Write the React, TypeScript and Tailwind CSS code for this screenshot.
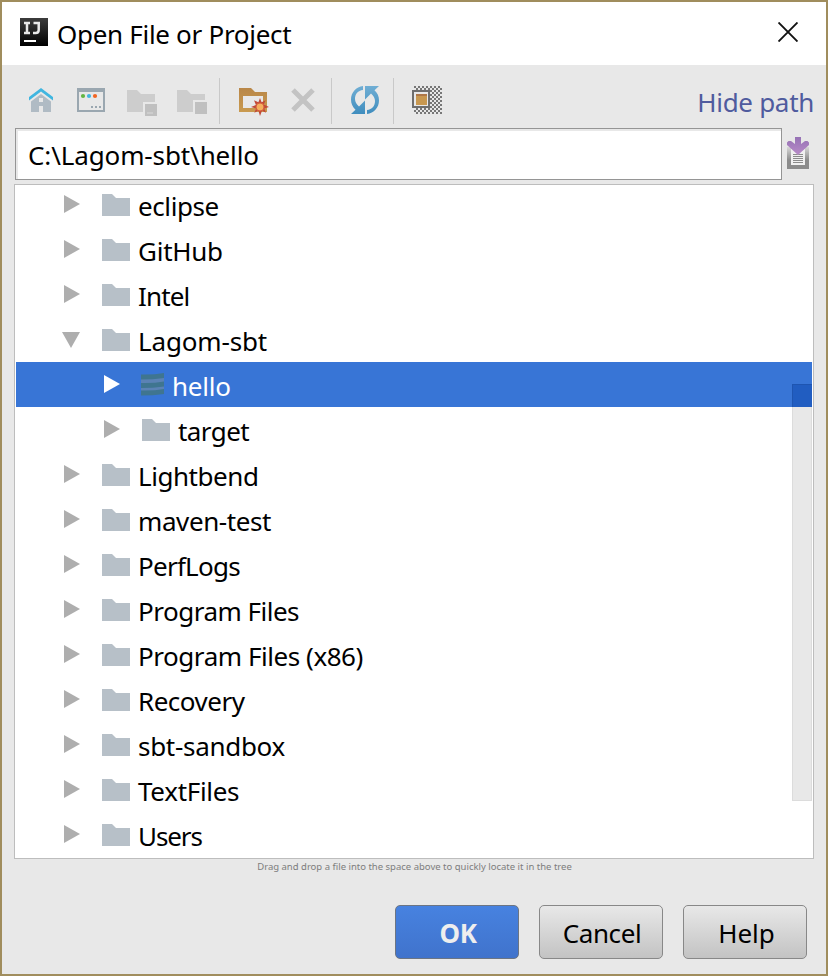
import React from "react";

type Node = { name: string; kind: "folder" | "sbt"; depth: number; open?: boolean; selected?: boolean; spacing: string };

const nodes: Node[] = [
  { name: "eclipse", kind: "folder", depth: 0, spacing: "tracking-[-0.4px]" },
  { name: "GitHub", kind: "folder", depth: 0, spacing: "tracking-[-0.25px]" },
  { name: "Intel", kind: "folder", depth: 0, spacing: "tracking-[-0.85px]" },
  { name: "Lagom-sbt", kind: "folder", depth: 0, open: true, spacing: "tracking-[-0.15px]" },
  { name: "hello", kind: "sbt", depth: 1, selected: true, spacing: "tracking-[-0.2px]" },
  { name: "target", kind: "folder", depth: 1, spacing: "tracking-[-0.55px]" },
  { name: "Lightbend", kind: "folder", depth: 0, spacing: "tracking-[-0.45px]" },
  { name: "maven-test", kind: "folder", depth: 0, spacing: "tracking-[-0.4px]" },
  { name: "PerfLogs", kind: "folder", depth: 0, spacing: "tracking-[-0.75px]" },
  { name: "Program Files", kind: "folder", depth: 0, spacing: "tracking-[-0.5px]" },
  { name: "Program Files (x86)", kind: "folder", depth: 0, spacing: "tracking-[-0.45px]" },
  { name: "Recovery", kind: "folder", depth: 0, spacing: "tracking-[-0.5px]" },
  { name: "sbt-sandbox", kind: "folder", depth: 0, spacing: "tracking-[-0.3px]" },
  { name: "TextFiles", kind: "folder", depth: 0, spacing: "tracking-[-0.3px]" },
  { name: "Users", kind: "folder", depth: 0, spacing: "tracking-[-1.1px]" },
];

function AppLogo() {
  return (
    <svg width="28" height="28" viewBox="0 0 28 28">
      <defs>
        <linearGradient id="logo" x1="0" y1="0" x2="0" y2="1">
          <stop offset="0" stopColor="#3c3c3c" />
          <stop offset="1" stopColor="#000" />
        </linearGradient>
      </defs>
      <rect width="28" height="28" fill="url(#logo)" />
      <path d="M4 5h6M7 5v10M4 15h6M13.500 5H20M18.700 4v8q0 3-3 3H13" fill="none" stroke="#e8e8e8" strokeWidth="2.500" />
      <rect x="4" y="22" width="12" height="2" fill="#fff" />
    </svg>
  );
}

function HomeIcon() {
  return (
    <svg width="24" height="24" viewBox="0 0 24 24">
      <path d="M2 13.500 12 6l10 7.500V24h-6v-6H8v6H2z" fill="#b0bbc4" />
      <path d="M8 16h8v2h-2v6h-4v-6H8z" fill="#b0bbc4" />
      <path d="M10 10h4v4h-4zM10 18h4v6h-4z" fill="#e8e8e8" />
      <path d="M8 17h2v7H8zM14 17h2v7h-2z" fill="#b0bbc4" />
      <path d="M0 9 12 0l12 9v3.500L12 3.500 0 12.500z" fill="#40b6e0" />
    </svg>
  );
}

function WindowIcon() {
  return (
    <svg width="28" height="24" viewBox="0 0 28 24">
      <path d="M0 0h28v24H0zM2 4v18h24V4z" fill="#9aa7b0" fillRule="evenodd" />
      <circle cx="6" cy="8" r="2.1" fill="#62b543" />
      <circle cx="12" cy="8" r="2.1" fill="#40b6e0" />
      <circle cx="18" cy="8" r="2.1" fill="#f26522" />
      <path d="M14 18h2v2h-2zM18 18h2v2h-2zM22 18h2v2h-2z" fill="#9aa7b0" />
    </svg>
  );
}

function DisabledFolderIcon({ module }: { module?: boolean }) {
  return (
    <svg width="30" height="26" viewBox="0 0 30 26">
      {module ? (
        <>
          <path d="M0 0h10l4 4h14v8H16v10H0z" fill="#cdcdcd" />
          <rect x="18" y="14" width="12" height="12" fill="#c0c0c0" />
          <rect x="20" y="22" width="6" height="2" fill="#cdcdcd" />
        </>
      ) : (
        <>
          <path d="M0 0h10l4 4h14v6H16v12H0z" fill="#cdcdcd" />
          <rect x="18" y="12" width="12" height="12" fill="#c0c0c0" />
        </>
      )}
    </svg>
  );
}

function NewFolderIcon() {
  return (
    <svg width="30" height="28" viewBox="0 0 30 28">
      <defs>
        <linearGradient id="gold" x1="0" y1="0" x2="0" y2="1">
          <stop offset="0" stopColor="#b98748" />
          <stop offset="1" stopColor="#c99a4f" />
        </linearGradient>
      </defs>
      <path d="M0 0h12l4 4h12v20H0zM4 8v12h20V8z" fill="url(#gold)" fillRule="evenodd" />
      <path
        d="M21 10l1.600 4.200 4.100-1.900-1.900 4.100L30 19l-4.800 1.600 1.900 4.100-4.100-1.900L21 28l-1.600-5.200-4.100 1.900 1.900-4.100L12 19l4.900-2.100-1.900-4.600 4.400 1.900z"
        fill="#c14a38"
      />
      <circle cx="21" cy="19" r="4" fill="#f4af5e" stroke="#d65d3f" strokeWidth="1" />
    </svg>
  );
}

function DeleteIcon() {
  return (
    <svg width="24" height="24" viewBox="0 0 24 24">
      <path d="M2 2 22 22M22 2 2 22" stroke="#c3c3c3" strokeWidth="5" />
    </svg>
  );
}

function SyncIcon() {
  return (
    <svg width="28" height="28" viewBox="0 0 28 28">
      <defs>
        <linearGradient id="sync" x1="0" y1="0" x2="0" y2="1">
          <stop offset="0" stopColor="#70aed4" />
          <stop offset="1" stopColor="#3f8dbe" />
        </linearGradient>
      </defs>
      <path d="M12 0C5 1 0 6.500 0 13.500c0 4 1.500 7.500 4.500 10.200L0 28h14V14.500l-6 6C5.500 18 4 16 4 13 4 8 7 4.500 12 4z" fill="url(#sync)" />
      <path d="M16 28c7-1 12-6.500 12-13.500 0-4-1.500-7.500-4.500-10.200L28 0H14v13.500l6-6C22.500 10 24 12 24 15c0 5-3 8.500-8 9z" fill="url(#sync)" />
    </svg>
  );
}

function HiddenFilesIcon() {
  return (
    <svg width="30" height="28" viewBox="0 0 30 28">
      <defs>
        <pattern id="check" x="2" y="0" width="4" height="4" patternUnits="userSpaceOnUse">
          <path d="M0 0h2v2H0zM2 2h2v2H2z" fill="#777" />
        </pattern>
      </defs>
      <rect x="2" width="28" height="28" fill="url(#check)" />
      <rect x="1" y="5" width="16" height="16" fill="#e8e8e8" stroke="#6e6e6e" strokeWidth="2" />
      <rect x="4" y="8" width="11" height="11" fill="#c89850" />
      <path d="M4 8h11v2H4z" fill="#ae7748" />
    </svg>
  );
}

function HistoryIcon() {
  return (
    <svg width="22" height="32" viewBox="0 0 22 32">
      <defs>
        <linearGradient id="box" x1="0" y1="0" x2="0" y2="1">
          <stop offset="0" stopColor="#d8d8d8" />
          <stop offset="0.600" stopColor="#8b8b8b" />
        </linearGradient>
        <linearGradient id="purple" x1="0" y1="0" x2="0" y2="1">
          <stop offset="0" stopColor="#9672b5" />
          <stop offset="1" stopColor="#b88cc8" />
        </linearGradient>
      </defs>
      <path d="M0 10h22v22H0z" fill="url(#box)" />
      <path d="M4 12h14v16H4z" fill="#f0f0f0" />
      <path d="M6 17h10v1H6zM6 19h10v1H6zM6 21h10v1H6zM6 23h10v1H6zM6 25h10v1H6z" fill="#8b8b8b" />
      <path d="M8 0h6v7l4-3h2.500L22 5.500V8L11 18 0 8V5.500L1.500 4H4l4 3z" fill="url(#purple)" />
    </svg>
  );
}

function Arrow({ open, selected }: { open?: boolean; selected?: boolean }) {
  return open ? (
    <svg className="mt-[15px] -ml-[2px] shrink-0" width="18" height="16" viewBox="0 0 18 16">
      <path d="M0 0h18L9 16z" fill="#aeaeae" />
    </svg>
  ) : (
    <svg className="mt-[13px] shrink-0" width="16" height="18" viewBox="0 0 16 18">
      <path d="M0 0v18l16-9z" fill={selected ? "#fff" : "#aeaeae"} />
    </svg>
  );
}

function NodeIcon({ kind }: { kind: Node["kind"] }) {
  return kind === "folder" ? (
    <svg className="mt-3 shrink-0" width="28" height="22" viewBox="0 0 28 22">
      <path d="M0 0h10l4 4h14v18H0z" fill="#b7c0c8" />
    </svg>
  ) : (
    <svg className="mt-[11px] -ml-px shrink-0" width="23" height="23" viewBox="0 0 23 23">
      <path d="M0 5q11 0 23-1v15q-12 1-23 1z" fill="#5b82b5" />
      <path d="M0 1.500q12 .500 23-1.500v5q-11 1.500-23 1.500zM0 10q12 .500 23-1.500v5q-11 1.500-23 1.500zM0 17.500q12 .500 23-1.500v5q-11 1.500-23 1.500z" fill="#3f7590" />
    </svg>
  );
}

function TreeRow({ node }: { node: Node }) {
  return (
    <div className={`mx-px flex h-[45px] shrink-0 items-start ${node.depth ? "pl-[88px]" : "pl-12"} ${node.selected ? "bg-[#3875d6] text-white" : ""}`}>
      <div className="flex w-[38px] shrink-0">
        <Arrow open={node.open} selected={node.selected} />
      </div>
      <NodeIcon kind={node.kind} />
      <span className={`ml-2 whitespace-nowrap text-[26px] leading-[48px] ${node.spacing}`}>{node.name}</span>
    </div>
  );
}

const Separator = ({ className }: { className: string }) => <div className={`h-[46px] w-px bg-[#c9c9c9] ${className}`} />;

export default function App() {
  return (
    <div className="flex h-[976px] w-[828px] flex-col border-2 border-[#a08d5d] bg-[#e8e8e8] font-['Noto_Sans','Open_Sans',sans-serif] text-black">
      <header className="flex h-[63px] shrink-0 items-start bg-white pl-[18px]">
        <div className="mt-4">
          <AppLogo />
        </div>
        <h1 className="ml-[9px] whitespace-nowrap text-[26px] leading-[64px] tracking-[-0.3px]">Open File or Project</h1>
        <svg className="mt-5 mr-7 ml-auto" width="20" height="20" viewBox="0 0 20 20">
          <path d="M.500.500l19 19M19.500.500l-19 19" stroke="#111" strokeWidth="1.900" />
        </svg>
      </header>

      <div className="flex h-[63px] shrink-0 items-start pl-[27px]">
        <div className="mt-[23px]"><HomeIcon /></div>
        <div className="mt-[23px] ml-6"><WindowIcon /></div>
        <div className="mt-[25px] ml-[22px]"><DisabledFolderIcon module /></div>
        <div className="mt-[25px] ml-5"><DisabledFolderIcon /></div>
        <Separator className="mt-[13px] ml-3" />
        <div className="mt-[23px] ml-[19px]"><NewFolderIcon /></div>
        <div className="mt-[23px] ml-[22px]"><DeleteIcon /></div>
        <Separator className="mt-[13px] ml-4" />
        <div className="mt-[21px] ml-[19px]"><SyncIcon /></div>
        <Separator className="mt-[13px] ml-[14px]" />
        <div className="mt-[21px] ml-[18px]"><HiddenFilesIcon /></div>
        <a className="mr-3 ml-auto whitespace-nowrap text-[26px] leading-[74px] tracking-[-0.3px] text-[#4f5b9e]">Hide path</a>
      </div>

      <div className="flex h-[52px] shrink-0 pl-[13px]">
        <div className="w-[767px] border border-[#959595] bg-white">
          <div className="flex h-full items-center border-t-2 border-l-2 border-[#e8e8e8] pl-[10px] text-[26px] whitespace-nowrap tracking-[-0.12px]">
            C:\Lagom-sbt\hello
          </div>
        </div>
        <div className="mt-[9px] ml-[5px]"><HistoryIcon /></div>
      </div>

      <div className="relative mt-1 ml-3 flex h-[675px] w-[800px] shrink-0 flex-col overflow-hidden border border-[#bdbdbd] bg-white">
        <div className="-mt-[3px] flex flex-col">
          {nodes.map((node) => (
            <TreeRow key={node.name} node={node} />
          ))}
        </div>
        <div className="absolute top-[199px] right-px h-[417px] w-5 border border-black/5 bg-black/9" />
        <div className="absolute top-[199px] right-px h-[23px] w-5 border-t border-l border-[#1e55b1] bg-[#215dc1]" />
      </div>

      <p className="h-[46px] shrink-0 pl-px text-center text-[9.500px] leading-4 text-[#7d7d7d]">
        Drag and drop a file into the space above to quickly locate it in the tree
      </p>

      <footer className="flex justify-end gap-5 pr-[19px] text-[26px]">
        <button className="h-[54px] w-[124px] rounded-[5px] border border-[#6c7583] bg-linear-to-b from-[#4782e0] to-[#4073cc] pt-[2px] pl-[2px] font-bold tracking-[-0.3px] text-[#eee]">OK</button>
        <button className="h-[54px] w-[124px] rounded-[5px] border border-[#888] bg-linear-to-b from-[#e8e8e8] to-[#c3c3c3] pt-[2px] pl-[2px] tracking-[-0.4px]">Cancel</button>
        <button className="h-[54px] w-[124px] rounded-[5px] border border-[#888] bg-linear-to-b from-[#e8e8e8] to-[#c3c3c3] pt-[2px] pl-[3px]">Help</button>
      </footer>
    </div>
  );
}
